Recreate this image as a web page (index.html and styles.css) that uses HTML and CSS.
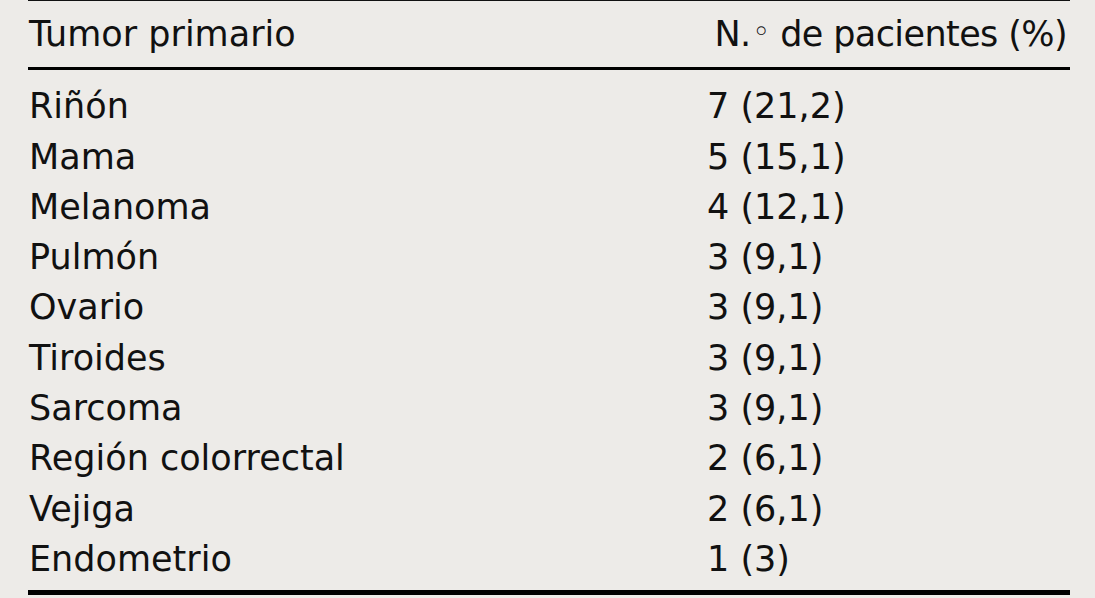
FILE: index.html
```html
<!DOCTYPE html>
<html lang="es">
<head>
<meta charset="utf-8">
<title>Tumor primario</title>
<link rel="stylesheet" href="styles.css">
</head>
<body>
<div class="table">
  <div class="head">
    <div class="cell">Tumor primario</div>
    <div class="cell num head-num">N.<span class="deg">◦</span> de pacientes (%)</div>
  </div>
  <div class="body">
    <div class="cell">Riñón</div><div class="cell num">7 (21,2)</div>
    <div class="cell">Mama</div><div class="cell num">5 (15,1)</div>
    <div class="cell">Melanoma</div><div class="cell num">4 (12,1)</div>
    <div class="cell">Pulmón</div><div class="cell num">3 (9,1)</div>
    <div class="cell">Ovario</div><div class="cell num">3 (9,1)</div>
    <div class="cell">Tiroides</div><div class="cell num">3 (9,1)</div>
    <div class="cell">Sarcoma</div><div class="cell num">3 (9,1)</div>
    <div class="cell">Región colorrectal</div><div class="cell num">2 (6,1)</div>
    <div class="cell">Vejiga</div><div class="cell num">2 (6,1)</div>
    <div class="cell">Endometrio</div><div class="cell num">1 (3)</div>
  </div>
</div>
</body>
</html>
```

FILE: styles.css
```css
html, body {
  margin: 0;
  padding: 0;
  background: #edebe8;
}
body {
  font-family: "DejaVu Sans", "Liberation Sans", sans-serif;
  font-size: 35px;
  line-height: 50.3px;
  color: #111;
}
.table {
  margin-left: 28px;
  width: 1042px;
  border-top: 1px solid #111;
  border-bottom: 5px solid #000;
}
.head {
  display: grid;
  grid-template-columns: 679px 1fr;
  padding: 8px 0 6px;
  border-bottom: 3px solid #000;
}
.body {
  display: grid;
  grid-template-columns: 679px 1fr;
  padding: 11px 0 6px;
}
.cell {
  padding-left: 1px;
  white-space: nowrap;
}
.num {
  padding-left: 0;
}
.head-num {
  text-align: right;
  padding-right: 3px;
  letter-spacing: -0.6px;
}
.deg {
  font-size: 30px;
  position: relative;
  top: -4px;
  margin-left: 2px;
}
```
